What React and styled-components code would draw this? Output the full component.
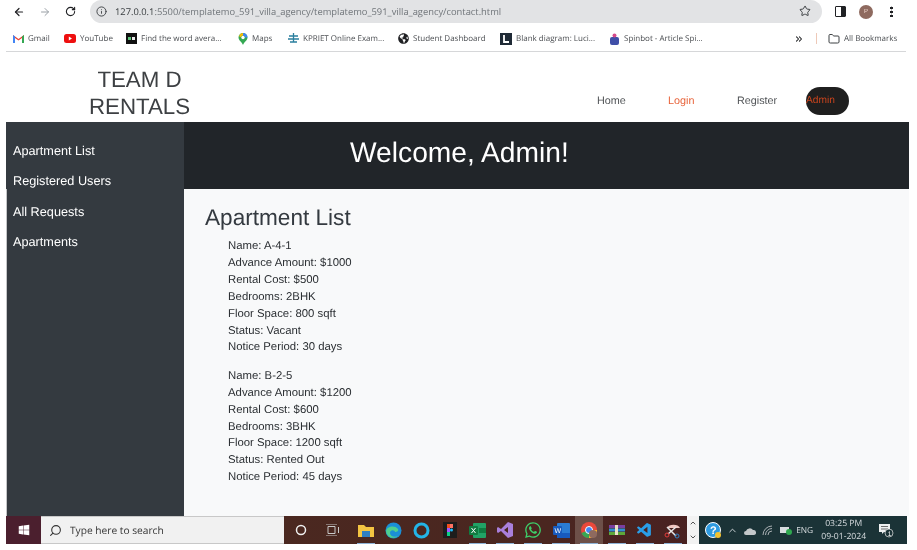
import React from "react";
import styled, { createGlobalStyle } from "styled-components";
import { ArrowLeft, ArrowRight, RotateCw, Info, Star, Search, Folder, ChevronsRight, ChevronUp, ChevronDown } from "lucide-react";
import { FaWindows, FaWhatsapp, FaGlobeAmericas } from "react-icons/fa";
import { VscVscode } from "react-icons/vsc";

const GlobalStyle = createGlobalStyle`
  html, body {
    margin: 0;
    background: #ffffff;
  }
  body {
    width: 917px;
    height: 550px;
    overflow: hidden;
    font-family: "Liberation Sans", Arial, sans-serif;
    text-rendering: geometricPrecision;
  }
`;

const Page = styled.div`
  width: 917px;
  height: 550px;
  background: #ffffff;
  filter: blur(0.3px);
`;

const UrlRow = styled.div`
  display: flex;
  align-items: center;
  height: 23px;
  padding-right: 17px;
`;

const NavIcons = styled.div`
  display: flex;
  align-items: center;
  width: 90px;
  padding-left: 13px;
  gap: 14px;
  box-sizing: border-box;
  color: #3c4043;
`;

const Omnibox = styled.div`
  display: flex;
  align-items: center;
  width: 732px;
  height: 23px;
  margin-top: -1px;
  padding: 0 11px 0 6px;
  box-sizing: border-box;
  background: #e2e3e5;
  border-radius: 12px;
  color: #3c4043;
`;

const Url = styled.span`
  margin-left: 8px;
  flex: 1;
  font-family: "Open Sans", sans-serif;
  font-size: 9.35px;
  color: #70757a;
  b {
    font-weight: 400;
    color: #3c4043;
  }
`;

const WindowTools = styled.div`
  display: flex;
  align-items: center;
  margin-left: 13px;
  gap: 13px;
`;

const SidePanelIcon = styled.span`
  width: 9px;
  height: 9px;
  border: 1px solid #202124;
  border-radius: 1px;
  background: linear-gradient(90deg, #ffffff 50%, #202124 50%);
`;

const Avatar = styled.span`
  display: flex;
  align-items: center;
  justify-content: center;
  width: 14px;
  height: 14px;
  border-radius: 50%;
  background: #8e6a5f;
  color: #f3d9d0;
  font-size: 6px;
`;

const Dots = styled.span`
  width: 3px;
  height: 11px;
  margin-left: 4px;
  background: radial-gradient(circle at center, #202124 1.3px, transparent 1.6px) 0 0 / 3px 4px;
`;

const BookmarkBar = styled.div`
  display: flex;
  align-items: center;
  height: 25px;
  margin: 3px 11px 0 13px;
`;

const Bookmark = styled.div`
  display: flex;
  align-items: center;
  flex: none;
  width: ${(p) => p.$width}px;
  gap: 4px;
  font-family: "Open Sans", sans-serif;
  font-size: 8px;
  color: #4b4e52;
  white-space: nowrap;
`;

const BookmarkDivider = styled.span`
  width: 1px;
  height: 11px;
  margin: 0 11px 0 12px;
  background: #eec9b8;
`;

const BarRule = styled.div`
  height: 1px;
  margin: 0 11px 0 6px;
  background: #d6d7d9;
`;

const SiteHeader = styled.header`
  display: flex;
  align-items: center;
  height: 70px;
  margin-left: 6px;
  margin-right: 8px;
`;

const Logo = styled.div`
  width: 267px;
  padding-top: 11px;
  font-size: 22.3px;
  line-height: 27px;
  color: #3d4043;
  text-align: center;
`;

const NavLinks = styled.nav`
  display: flex;
  align-items: center;
  margin-left: 324px;
  margin-top: 27px;
`;

const NavLink = styled.a`
  width: ${(p) => p.$width}px;
  font-size: 10.8px;
  color: ${(p) => (p.$active ? "#e8633a" : "#505356")};
`;

const AdminPill = styled.a`
  display: flex;
  align-items: center;
  width: 43px;
  height: 28px;
  border-radius: 14px;
  background: #1f1f1f;
  color: #c9441d;
  font-size: 10.2px;
`;

const Body = styled.div`
  display: grid;
  grid-template-columns: 178px 725px;
  height: 394px;
  margin-left: 6px;
`;

const Sidebar = styled.aside`
  padding: 14px 7px;
  background:
    linear-gradient(#343a40 0 0) 0 0 / 100% 67px no-repeat,
    linear-gradient(#343a40 0 0) 1px 0 / 100% 100% no-repeat,
    #c4c5c7;
`;

const SideLink = styled.a`
  display: block;
  height: 30.3px;
  font-size: 12.7px;
  line-height: 30.3px;
  color: #ffffff;
`;

const Main = styled.main`
  display: flex;
  flex-direction: column;
  background: #f8f9fa;
`;

const Banner = styled.div`
  height: 67px;
  padding-left: 166px;
  background: #212529;
  color: #ffffff;
  font-size: 28.2px;
  line-height: 61px;
`;

const Content = styled.section`
  padding: 15px 21px;
  color: #343a40;
`;

const Title = styled.h2`
  margin: 0 0 7px;
  font-size: 22.6px;
  font-weight: 400;
  line-height: 27px;
`;

const Listing = styled.div`
  margin: 0 0 11.5px 23px;
`;

const Line = styled.div`
  font-size: 11.35px;
  line-height: 16.9px;
  color: #2b2f33;
`;

const Taskbar = styled.footer`
  display: flex;
  width: 901px;
  height: 28px;
  margin-left: 6px;
  background: linear-gradient(90deg, #4b2a20 0%, #4a2620 60%, #471a22 100%);
`;

const StartButton = styled.div`
  display: flex;
  align-items: center;
  justify-content: center;
  width: 35px;
  background: #4b1f2e;
  color: #ffffff;
`;

const SearchBox = styled.div`
  display: flex;
  align-items: center;
  width: 243px;
  padding-left: 8px;
  gap: 8px;
  box-sizing: border-box;
  background: #f1f1f1;
  border-top: 1px solid #c8c8c8;
  border-bottom: 1px solid #c8c8c8;
  font-family: "Open Sans", sans-serif;
  font-size: 10.2px;
  color: #333333;
`;

const Slot = styled.div`
  position: relative;
  display: flex;
  align-items: center;
  justify-content: center;
  flex: none;
  width: ${(p) => p.$width || 27.9}px;
  background: ${(p) => (p.$active ? "#6d5049" : "transparent")};
  &::after {
    content: "";
    display: ${(p) => (p.$running ? "block" : "none")};
    position: absolute;
    left: 5px;
    right: 5px;
    bottom: 0;
    height: 1px;
    background: #8fb4d8;
  }
`;

const AppStrip = styled.div`
  display: flex;
  margin-left: 5px;
`;

const Spinner = styled.div`
  display: flex;
  flex-direction: column;
  align-items: center;
  justify-content: space-between;
  width: 12px;
  padding: 3px 0;
  box-sizing: border-box;
  background: #f2f2f2;
  color: #555555;
`;

const Tray = styled.div`
  display: flex;
  align-items: center;
  flex: 1;
  padding-left: 6px;
  background: #1b3337;
  color: #d8dde0;
  font-family: "Open Sans", sans-serif;
`;

const TrayItem = styled.div`
  display: flex;
  align-items: center;
  justify-content: center;
  flex: none;
  width: ${(p) => p.$width}px;
`;

const TrayLang = styled.span`
  font-size: 8.4px;
`;

const Clock = styled.div`
  display: flex;
  flex-direction: column;
  align-items: center;
  font-size: 8.6px;
  line-height: 13px;
`;

const bookmarks = [
  { label: "Gmail", width: 51, icon: <svg width="11" height="9" viewBox="0 0 11 9"><path d="M0 9V1l5.500 4L11 1v8H9V4L5.500 6.500 2 4v5z" fill="#ea4335" /><path d="M0 9V1l2 1.500V9z" fill="#4285f4" /><path d="M9 9V2.500L11 1v8z" fill="#34a853" /></svg> },
  { label: "YouTube", width: 62, icon: <svg width="12" height="9" viewBox="0 0 12 9"><rect width="12" height="9" rx="2.500" fill="#ee0f0f" /><path d="M4.800 2.500 8 4.500 4.800 6.500z" fill="#fff" /></svg> },
  { label: "Find the word avera...", width: 112, icon: <svg width="11" height="11" viewBox="0 0 11 11"><rect width="11" height="11" fill="#111" /><rect x="2" y="4" width="3" height="3" fill="#5ec27a" /><rect x="6" y="4" width="3" height="3" fill="#e8e8e8" /></svg> },
  { label: "Maps", width: 50, icon: <svg width="10" height="12" viewBox="0 0 10 12"><path d="M5 0a4.500 4.500 0 0 1 4.500 4.500C9.500 7.500 6 9 5 12 4 9 .5 7.500.5 4.500A4.500 4.500 0 0 1 5 0z" fill="#34a853" /><path d="M5 0a4.500 4.500 0 0 1 4.500 4.500L7 4.500A2 2 0 0 0 5 2.500z" fill="#4285f4" /><path d="M1 3a4.500 4.500 0 0 1 4-3v2.500A2 2 0 0 0 3 4.500z" fill="#fbbc04" /><circle cx="5" cy="4.500" r="1.700" fill="#fff" /></svg> },
  { label: "KPRIET Online Exam...", width: 110, icon: <svg width="11" height="11" viewBox="0 0 11 11"><path d="M5.500 0v9M1 3h9M0 6h11M2 9h7" stroke="#2a7f9e" strokeWidth="1.300" /></svg> },
  { label: "Student Dashboard", width: 102, icon: <FaGlobeAmericas size={11} color="#202124" /> },
  { label: "Blank diagram: Luci...", width: 109, icon: <svg width="12" height="12" viewBox="0 0 12 12"><rect width="12" height="12" fill="#1f2a36" /><path d="M4 2v7h5" stroke="#fff" strokeWidth="1.800" fill="none" /></svg> },
  { label: "Spinbot - Article Spi...", width: 185, icon: <svg width="11" height="12" viewBox="0 0 11 12"><rect x="1" y="4" width="9" height="8" rx="2" fill="#3f4fa8" /><circle cx="5.500" cy="2.500" r="2" fill="#d64a8a" /></svg> },
];

const listings = [
  ["Name: A-4-1", "Advance Amount: $1000", "Rental Cost: $500", "Bedrooms: 2BHK", "Floor Space: 800 sqft", "Status: Vacant", "Notice Period: 30 days"],
  ["Name: B-2-5", "Advance Amount: $1200", "Rental Cost: $600", "Bedrooms: 3BHK", "Floor Space: 1200 sqft", "Status: Rented Out", "Notice Period: 45 days"],
];

const sideLinks = ["Apartment List", "Registered Users", "All Requests", "Apartments"];

// taskbar app icons, left to right
const apps = [
  { id: "explorer", running: true, icon: <svg width="16" height="14" viewBox="0 0 16 14"><path d="M0 2h6l2 2h8v10H0z" fill="#f4c542" /><rect x="4" y="8" width="8" height="6" fill="#2f7fc1" /></svg> },
  { id: "edge", icon: <svg width="17" height="17" viewBox="0 0 17 17"><circle cx="8.500" cy="8.500" r="8" fill="#1b8fd6" /><path d="M1 9c1-5 9-6 12-2 1 2-1 3-3 3 0-2-5-3-5 1 0 3 4 5 8 3-3 3-11 3-12-5z" fill="#4fcf8f" /></svg> },
  { id: "cortana", icon: <svg width="17" height="17" viewBox="0 0 17 17"><circle cx="8.500" cy="8.500" r="6.500" fill="none" stroke="#23b5e8" strokeWidth="3" /></svg> },
  { id: "figma", icon: <svg width="14" height="16" viewBox="0 0 14 16"><rect width="14" height="16" fill="#1d1d1d" /><rect x="4" y="2" width="3" height="4" fill="#f24e1e" /><rect x="7" y="2" width="3" height="4" fill="#ff7262" /><rect x="4" y="6" width="3" height="4" fill="#a259ff" /><circle cx="8.500" cy="8" r="1.500" fill="#1abcfe" /><rect x="4" y="10" width="3" height="4" fill="#0acf83" /></svg> },
  { id: "excel", running: true, icon: <svg width="17" height="15" viewBox="0 0 17 15"><rect x="4" width="13" height="15" rx="1" fill="#21a366" /><rect x="10" y="5" width="7" height="5" fill="#107c41" /><rect y="3" width="9" height="9" rx="1" fill="#107c41" /><path d="M2.500 5l4 5M6.500 5l-4 5" stroke="#fff" /></svg> },
  { id: "studio", running: true, icon: <svg width="16" height="16" viewBox="0 0 16 16"><path d="M11 0l5 2v12l-5 2L4 9l-3 2-1-1V6l1-1 3 2zM11 5L7 8l4 3z" fill="#a97fdc" /></svg> },
  { id: "whatsapp", running: true, icon: <FaWhatsapp size={18} color="#3ed06a" /> },
  { id: "word", running: true, icon: <svg width="17" height="15" viewBox="0 0 17 15"><rect x="4" width="13" height="15" rx="1" fill="#2b7cd3" /><rect x="4" y="10" width="13" height="5" fill="#185abd" /><rect y="3" width="9" height="9" rx="1" fill="#185abd" /><text x="1.500" y="10" fontSize="7" fill="#fff" fontFamily="Liberation Sans">W</text></svg> },
  { id: "chrome", running: true, active: true, icon: <svg width="18" height="18" viewBox="0 0 18 18"><circle cx="9" cy="9" r="8" fill="#e9483b" /><path d="M9 9 1.500 12a8 8 0 0 0 7.500 5z" fill="#36a853" /><path d="M9 9h8a8 8 0 0 1-8 8z" fill="#fbc02d" /><circle cx="9" cy="9" r="3.500" fill="#4285f4" stroke="#fff" /><circle cx="13" cy="13" r="4" fill="#8e6a5f" /></svg> },
  { id: "winrar", running: true, icon: <svg width="16" height="10" viewBox="0 0 16 10"><rect width="16" height="3" fill="#7a3fa0" /><rect y="3.500" width="16" height="3" fill="#2f8fd0" /><rect y="7" width="16" height="3" fill="#5ea83a" /><rect x="6" width="3" height="10" fill="#e9e2c8" /></svg> },
  { id: "vscode", running: true, icon: <VscVscode size={17} color="#2a9ee8" /> },
  { id: "snip", running: true, icon: <svg width="17" height="17" viewBox="0 0 17 17"><path d="M3 6a7 5 0 0 1 13 0z" fill="#f0c6c0" /><path d="M3 5l9 9M12 5l-8 7" stroke="#e6e6e6" strokeWidth="1.500" /><circle cx="13" cy="14" r="2" fill="none" stroke="#2f7fc1" /><circle cx="3" cy="13" r="2" fill="none" stroke="#e23b3b" /></svg> },
];

const App = () => {
  return (
    <Page>
      <GlobalStyle />
      <UrlRow>
        <NavIcons>
          <ArrowLeft size={12} strokeWidth={2.4} color="#202124" />
          <ArrowRight size={12} color="#9aa0a6" />
          <RotateCw size={11} strokeWidth={2.4} color="#202124" />
        </NavIcons>
        <Omnibox>
          <Info size={11} />
          <Url><b>127.0.0.1</b>:5500/templatemo_591_villa_agency/templatemo_591_villa_agency/contact.html</Url>
          <Star size={12} />
        </Omnibox>
        <WindowTools>
          <SidePanelIcon />
          <Avatar>P</Avatar>
          <Dots />
        </WindowTools>
      </UrlRow>
      <BookmarkBar>
        {bookmarks.map((b) => (
          <Bookmark key={b.label} $width={b.width}>{b.icon}{b.label}</Bookmark>
        ))}
        <ChevronsRight size={10} strokeWidth={2.5} color="#202124" />
        <BookmarkDivider />
        <Bookmark $width={72}><Folder size={12} color="#3c4043" />All Bookmarks</Bookmark>
      </BookmarkBar>
      <BarRule />
      <SiteHeader>
        <Logo>TEAM D<br />RENTALS</Logo>
        <NavLinks>
          <NavLink $width={71}>Home</NavLink>
          <NavLink $width={69} $active>Login</NavLink>
          <NavLink $width={69}>Register</NavLink>
          <AdminPill>Admin</AdminPill>
        </NavLinks>
      </SiteHeader>
      <Body>
        <Sidebar>
          {sideLinks.map((l) => <SideLink key={l}>{l}</SideLink>)}
        </Sidebar>
        <Main>
          <Banner>Welcome, Admin!</Banner>
          <Content>
            <Title>Apartment List</Title>
            {listings.map((rows) => (
              <Listing key={rows[0]}>
                {rows.map((r) => <Line key={r}>{r}</Line>)}
              </Listing>
            ))}
          </Content>
        </Main>
      </Body>
      <Taskbar>
        <StartButton><FaWindows size={12} /></StartButton>
        <SearchBox><Search size={13} style={{ transform: "scaleX(-1)" }} />Type here to search</SearchBox>
        <Slot $width={33}>
          <svg width="12" height="12" viewBox="0 0 12 12"><circle cx="6" cy="6" r="4.500" fill="none" stroke="#f0f0f0" strokeWidth="1.500" /></svg>
        </Slot>
        <Slot $width={30}>
          <svg width="13" height="12" viewBox="0 0 13 12"><path d="M2 2.500h7v7H2zM0 0h11M0 12h11M12.500 3v6" stroke="#c8c8c8" fill="none" /></svg>
        </Slot>
        <AppStrip>
          {apps.map((a) => (
            <Slot key={a.id} $running={a.running} $active={a.active}>{a.icon}</Slot>
          ))}
        </AppStrip>
        <Spinner>
          <ChevronUp size={8} strokeWidth={3} />
          <ChevronDown size={8} strokeWidth={3} />
        </Spinner>
        <Tray>
          <TrayItem $width={18}>
            <svg width="17" height="17" viewBox="0 0 17 17"><circle cx="8" cy="8" r="7.500" fill="#2e9be0" stroke="#fff" /><text x="5" y="12" fontSize="11" fontWeight="700" fill="#fff" fontFamily="Liberation Sans">?</text><circle cx="13" cy="13" r="3" fill="#f2c230" /></svg>
          </TrayItem>
          <TrayItem $width={19}><ChevronUp size={11} /></TrayItem>
          <TrayItem $width={17}>
            <svg width="12" height="9" viewBox="0 0 12 9"><path d="M2 9a2 2 0 0 1 0-4 4 4 0 0 1 7-1 2.500 2.500 0 0 1 1 5z" fill="#c4c8ca" /></svg>
          </TrayItem>
          <TrayItem $width={18}>
            <svg width="11" height="11" viewBox="0 0 11 11"><path d="M1 10a9 9 0 0 1 9-9M3.500 10A6.500 6.500 0 0 1 10 3.500M6 10a4 4 0 0 1 4-4" fill="none" stroke="#b8bcbf" strokeWidth=".9" /></svg>
          </TrayItem>
          <TrayItem $width={18}>
            <svg width="12" height="9" viewBox="0 0 12 9"><rect y="1" width="9" height="6" fill="#d8dde0" /><circle cx="9" cy="6" r="3" fill="#2fa84f" /></svg>
          </TrayItem>
          <TrayItem $width={20}><TrayLang>ENG</TrayLang></TrayItem>
          <TrayItem $width={58}>
            <Clock><span>03:25 PM</span><span>09-01-2024</span></Clock>
          </TrayItem>
          <TrayItem $width={26}>
            <svg width="16" height="15" viewBox="0 0 16 15"><path d="M1 1h11v8H6L4 11V9H1z" fill="#eef0f1" /><path d="M3 3.500h7M3 6h7" stroke="#333" strokeWidth=".7" /><circle cx="11" cy="10" r="4" fill="#1b3337" stroke="#e8e8e8" strokeWidth=".7" /><text x="9.800" y="12.500" fontSize="6.500" fill="#fff" fontFamily="Liberation Sans">1</text></svg>
          </TrayItem>
        </Tray>
      </Taskbar>
    </Page>
  );
};

export default App;
